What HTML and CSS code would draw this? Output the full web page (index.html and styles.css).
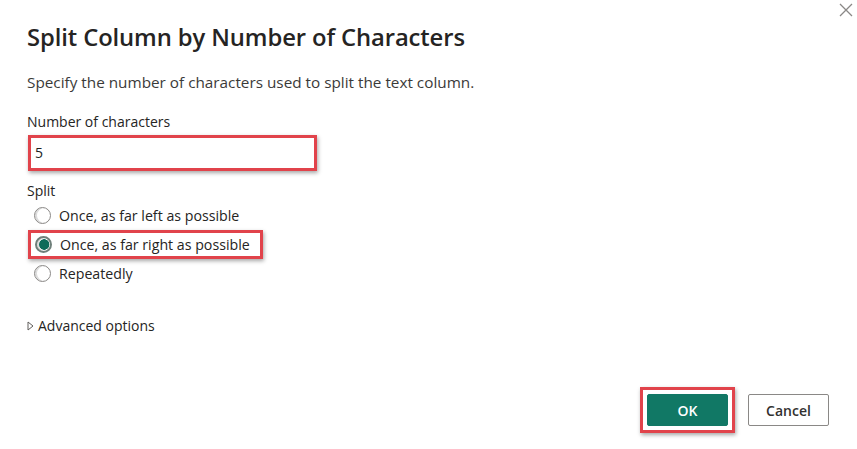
FILE: index.html
```html
<!DOCTYPE html>
<html>
<head>
<meta charset="utf-8">
<link rel="stylesheet" href="styles.css">
</head>
<body>
<div class="dialog">
  <button class="close" aria-label="Close">
    <svg width="14" height="14" viewBox="0 0 14 14"><path d="M1 1L13 13M13 1L1 13" stroke="#8a8886" stroke-width="1.3" fill="none"/></svg>
  </button>
  <h1 class="title">Split Column by Number of Characters</h1>
  <p class="desc">Specify the number of characters used to split the text column.</p>
  <div class="field">
    <label class="label">Number of characters</label>
    <div class="hl hl-input"><div class="input">5</div></div>
  </div>
  <div class="group">
    <div class="label">Split</div>
    <div class="radio"><span class="dot"></span><span>Once, as far left as possible</span></div>
    <div class="hl hl-radio"><div class="radio"><span class="dot on"></span><span>Once, as far right as possible</span></div></div>
    <div class="radio"><span class="dot"></span><span>Repeatedly</span></div>
  </div>
  <div class="adv"><svg width="7" height="10" viewBox="0 0 7 10"><path d="M1 1L6 5L1 9Z" fill="none" stroke="#605e5c" stroke-width="1"/></svg><span>Advanced options</span></div>
  <div class="footer">
    <div class="hl hl-ok"><button class="btn primary">OK</button></div>
    <button class="btn secondary">Cancel</button>
  </div>
</div>
</body>
</html>
```
FILE: styles.css
```css
* { box-sizing: border-box; }
html, body { margin: 0; padding: 0; background: #fff; }
body { width: 857px; height: 449px; overflow: hidden; font-family: "Open Sans", "Noto Sans", sans-serif; color: #323130; }
.dialog { position: relative; height: 449px; padding: 22px 28px 0 27px; display: flex; flex-direction: column; }
.close { position: absolute; top: 3px; right: 4px; border: 0; background: none; padding: 0; width: 14px; height: 14px; }
.close svg { display: block; }
.title { margin: 0; font-size: 23.8px; font-weight: 600; color: #252423; line-height: 30px; letter-spacing: -0.1px; }
.desc { margin: 20px 0 0; font-size: 15.3px; line-height: 20px; color: #3b3a39; }
.field { margin-top: 18px; }
.label { font-size: 14px; line-height: 20px; color: #252423; }
.hl { border: 3px solid #e1434b; box-shadow: 1px 2px 4px rgba(0,0,0,0.35); }
.hl-input { width: 289px; height: 36px; margin-top: 3px; margin-left: 1px; padding: 0; }
.input { height: 30px; padding: 5px 4px; font-size: 14px; line-height: 20px; color: #201f1e; }
.group { margin-top: 10px; }
.radio { display: flex; align-items: center; height: 29px; font-size: 14.2px; color: #252423; padding-left: 7px; }
.dot { width: 17px; height: 17px; border-radius: 50%; border: 1px solid #8a8886; margin-right: 8px; box-shadow: inset 2px 0 0 #dcdcdc; }
.dot.on { border: 2px solid #6f7f7a; background: radial-gradient(circle at 55% 50%, #0e6b5a 0 5px, #fff 5.5px); }
.hl-radio { width: 235px; margin-left: 1px; }
.hl-radio .radio { padding-left: 4px; height: 23px; }
.adv { margin-top: 28px; display: flex; align-items: center; font-size: 14px; color: #252423; }
.adv svg { margin-right: 4px; }
.footer { margin-top: auto; margin-bottom: 16px; display: flex; justify-content: flex-end; align-items: center; gap: 13px; }
.hl-ok { padding: 4px; }
.btn { font-family: inherit; font-size: 14px; font-weight: 600; height: 32px; width: 81px; border-radius: 2px; cursor: pointer; }
.primary { background: #117865; color: #fff; border: 1px solid #117865; }
.secondary { background: #fff; color: #323130; border: 1px solid #8a8886; }
```
